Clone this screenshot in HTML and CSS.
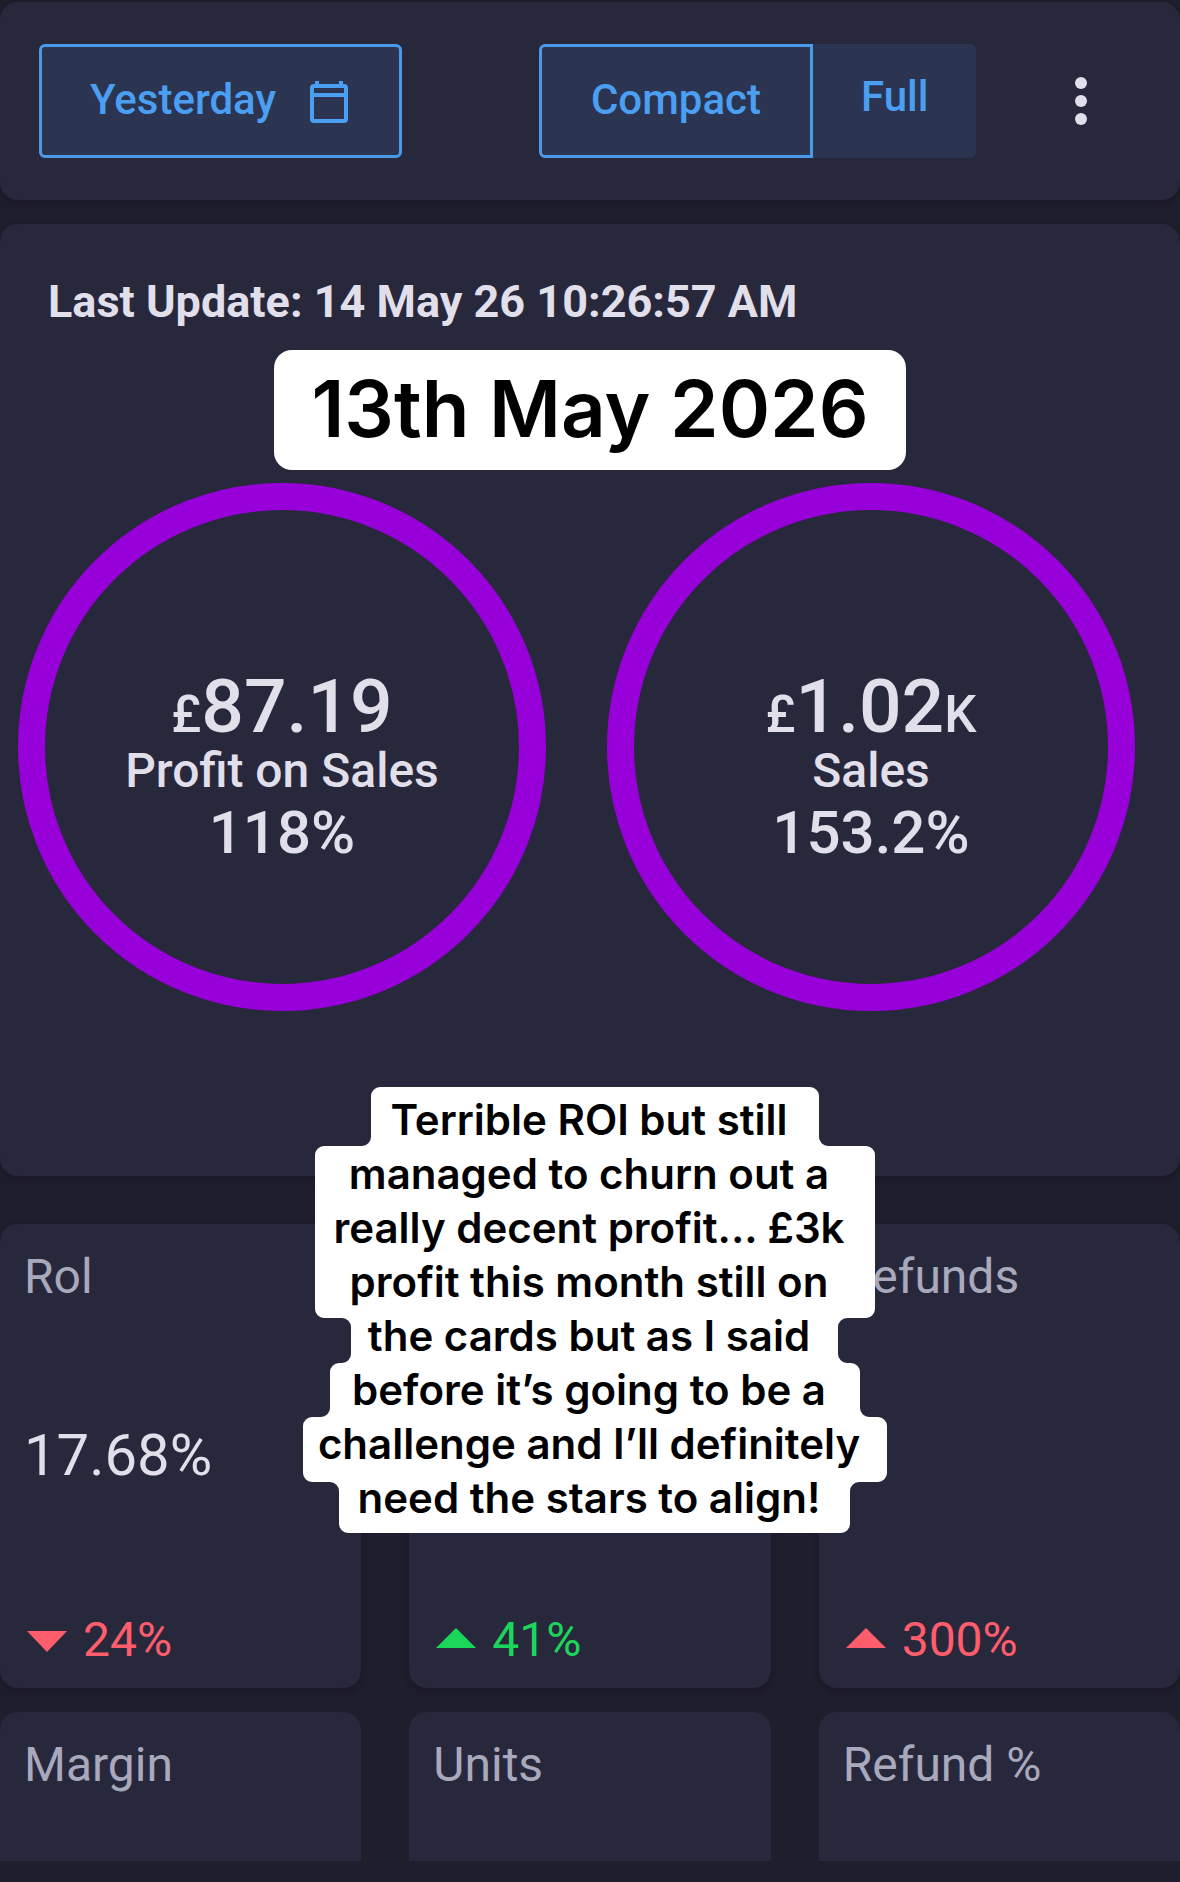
FILE: index.html
```html
<!DOCTYPE html>
<html lang="en">
<head>
    <meta charset="UTF-8">
    <meta name="viewport" content="width=device-width, initial-scale=1.0">
    <title>Sales Dashboard</title>
    <link rel="stylesheet" href="styles.css">
</head>
<body>
    <header class="card toolbar">
        <button type="button" class="btn btn-date">
            <span class="btn-label">Yesterday</span>
            <svg class="calendar" viewBox="0 0 50 50" aria-hidden="true">
                <rect x="8" y="10" width="34" height="35" rx="2" fill="none" stroke="currentColor" stroke-width="4"/>
                <path d="M8 17h34v4H8zM11 5h4v5h-4zM35 5h4v5h-4z" fill="currentColor"/>
            </svg>
        </button>
        <div class="toggle">
            <button type="button" class="btn active"><span class="btn-label">Compact</span></button>
            <button type="button" class="btn"><span class="btn-label">Full</span></button>
        </div>
        <button type="button" class="more" aria-label="More options">
            <svg viewBox="0 0 12 48" aria-hidden="true">
                <circle cx="6" cy="6" r="6"/>
                <circle cx="6" cy="24" r="6"/>
                <circle cx="6" cy="42" r="6"/>
            </svg>
        </button>
    </header>

    <main>
        <section class="card summary">
            <p class="updated">Last Update: 14 May 26 10:26:57 AM</p>
            <h1 class="date-label">13th May 2026</h1>

            <div class="rings">
                <div class="ring">
                    <p class="amount"><small>£</small>87.19</p>
                    <p class="name">Profit on Sales</p>
                    <p class="percent">118%</p>
                </div>
                <div class="ring">
                    <p class="amount"><small>£</small>1.02<small>K</small></p>
                    <p class="name">Sales</p>
                    <p class="percent">153.2%</p>
                </div>
            </div>

            <!-- caption lies over the summary card and the tiles -->
            <div class="caption">
                <svg class="caption-shape" viewBox="0 0 584 446" aria-hidden="true">
                    <path fill="#fff" d="M77 0H507a9 9 0 0 1 9 9V50a9 9 0 0 0 9 9H563a9 9 0 0 1 9 9V222a9 9 0 0 1-9 9H544a9 9 0 0 0-9 9V267a9 9 0 0 0 9 9H548a9 9 0 0 1 9 9V321a9 9 0 0 0 9 9H575a9 9 0 0 1 9 9V386a9 9 0 0 1-9 9H556a9 9 0 0 0-9 9V437a9 9 0 0 1-9 9H45a9 9 0 0 1-9-9V404a9 9 0 0 0-9-9H9a9 9 0 0 1-9-9V339a9 9 0 0 1 9-9H18a9 9 0 0 0 9-9V285a9 9 0 0 1 9-9H39a9 9 0 0 0 9-9V240a9 9 0 0 0-9-9H21a9 9 0 0 1-9-9V68a9 9 0 0 1 9-9H59a9 9 0 0 0 9-9V9a9 9 0 0 1 9-9z"/>
                </svg>
                <p class="caption-text">
                    Terrible ROI but still<br>
                    managed to churn out a<br>
                    really decent profit... £3k<br>
                    profit this month still on<br>
                    the cards but as I said<br>
                    before it’s going to be a<br>
                    challenge and I’ll definitely<br>
                    need the stars to align!
                </p>
            </div>
        </section>

        <section class="tiles">
            <article class="card tile">
                <h2 class="tile-name">Rol</h2>
                <p class="tile-value">17.68%</p>
                <p class="delta bad">
                    <svg viewBox="0 0 43 28" aria-hidden="true"><path d="M3 5h40L23 26z"/></svg>
                    24%
                </p>
            </article>
            <article class="card tile">
                <p class="delta good">
                    <svg viewBox="0 0 43 28" aria-hidden="true"><path d="M3 22h40L23 2z"/></svg>
                    41%
                </p>
            </article>
            <article class="card tile">
                <h2 class="tile-name">Refunds</h2>
                <p class="delta bad">
                    <svg viewBox="0 0 43 28" aria-hidden="true"><path d="M3 22h40L23 2z"/></svg>
                    300%
                </p>
            </article>
            <article class="card tile cut">
                <h2 class="tile-name">Margin</h2>
            </article>
            <article class="card tile cut">
                <h2 class="tile-name">Units</h2>
            </article>
            <article class="card tile cut">
                <h2 class="tile-name">Refund %</h2>
            </article>
        </section>
    </main>
</body>
</html>
```
FILE: styles.css
```css
* {
    box-sizing: border-box;
}

body {
    margin: 0;
    padding: 2px 0 20px;
    background-color: #1f1e2c;
    color: #e0dfea;
    font-family: Roboto, sans-serif;
}

h1, h2, p {
    margin: 0;
}

.card {
    background-color: #28283d;
    border-radius: 18px;
    box-shadow: 0 3px 6px rgba(20, 18, 36, 0.5);
}

/* toolbar */
.toolbar {
    display: flex;
    align-items: center;
    padding: 42px 69px 42px 39px;
}

.btn {
    display: flex;
    align-items: center;
    justify-content: center;
    height: 114px;
    padding: 0 48px;
    border: 3px solid transparent;
    border-radius: 6px;
    background-color: #2b3551;
    color: #4b9ff2;
    font: 500 42px Roboto, sans-serif;
    cursor: pointer;
}

.btn-label {
    padding-bottom: 4px;
}

.btn-date {
    gap: 28px;
    padding-right: 45px;
    border-color: #4b9ae8;
}

.calendar {
    width: 50px;
    height: 50px;
}

.toggle {
    display: flex;
    margin-left: 137px;
}

.toggle .btn {
    border-radius: 0 6px 6px 0;
    padding: 0 45px 6px;
}

.toggle .active {
    border-radius: 6px 0 0 6px;
    border-color: #4b9ae8;
    padding: 0 49px;
}

.more {
    display: flex;
    justify-content: center;
    width: 60px;
    margin-left: auto;
    padding: 0;
    border: none;
    background: none;
    cursor: pointer;
}

.more svg {
    width: 12px;
    height: 48px;
    fill: #e0dfea;
}

/* summary */
.summary {
    position: relative;
    margin-top: 24px;
    padding: 51px 0 165px;
}

.updated {
    padding: 0 48px;
    font-size: 45px;
    font-weight: 700;
    line-height: 54px;
}

.date-label {
    width: fit-content;
    margin: 21px auto 13px;
    padding: 11px 37px 14px;
    border-radius: 18px;
    background-color: #fff;
    color: #000;
    font: 600 78px/95px Inter, sans-serif;
}

.rings {
    display: grid;
    grid-template-columns: 1fr 1fr;
    gap: 61px;
    padding: 0 45px 0 18px;
}

.ring {
    display: flex;
    flex-direction: column;
    align-items: center;
    justify-content: center;
    aspect-ratio: 1;
    padding-top: 42px;
    border: 27px solid #9700d9;
    border-radius: 50%;
    font-weight: 500;
}

.amount {
    font-size: 75px;
    line-height: 75px;
}

.amount small {
    font-size: 51px;
    line-height: 1;
}

.name {
    font-size: 48px;
    line-height: 54px;
}

.percent {
    font-size: 60px;
    line-height: 70px;
}

/* caption */
.caption {
    position: absolute;
    top: 863px;
    left: calc(50% - 287px);
    z-index: 1;
    width: 584px;
}

.caption-shape {
    display: block;
    width: 100%;
}

.caption-text {
    position: absolute;
    inset: 0;
    padding: 6px 12px 0 0;
    color: #000;
    font: 600 42px/54px Inter, sans-serif;
    text-align: center;
    white-space: nowrap;
}

/* tiles */
.tiles {
    display: grid;
    grid-template-columns: repeat(3, 1fr);
    gap: 24px 48px;
    margin-top: 48px;
}

.tile {
    display: flex;
    flex-direction: column;
    min-height: 464px;
    padding: 25px 24px 20px;
}

.tile-name {
    color: #a9a9bd;
    font-size: 48px;
    font-weight: 400;
    line-height: 56px;
}

.tile-value {
    margin-top: 115px;
    font-size: 58px;
    line-height: 70px;
}

.delta {
    display: flex;
    align-items: center;
    gap: 16px;
    margin-top: auto;
    font-size: 48px;
    line-height: 56px;
}

.delta svg {
    width: 43px;
    height: 28px;
    fill: currentColor;
}

.bad {
    color: #ff5c6c;
}

.good {
    color: #1bd65a;
}

/* last row runs under the bottom edge */
.cut {
    min-height: 149px;
    border-radius: 18px 18px 0 0;
    box-shadow: none;
}
```
